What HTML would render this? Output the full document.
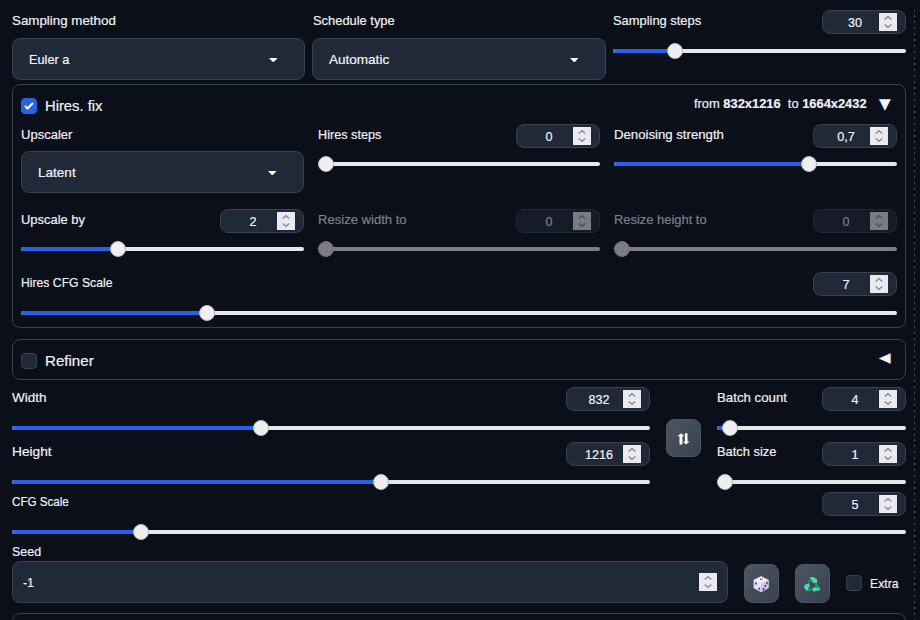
<!DOCTYPE html>
<html lang="en">
<head>
<meta charset="utf-8">
<title>txt2img settings</title>
<style>
html,body{margin:0;padding:0;background:#0b0f19;}
body{width:920px;height:620px;overflow:hidden;position:relative;
  font-family:"Liberation Sans",sans-serif;color:#f3f4f6;font-size:13px;}
#app{position:absolute;left:0;top:0;width:920px;height:620px;overflow:hidden;background:#0b0f19;}
#app *{box-sizing:border-box;}
.lbl{position:absolute;margin-top:1px;margin-left:0.3px;-webkit-text-stroke:0.2px currentColor;white-space:nowrap;font-size:13.5px;line-height:20px;color:#f0f1f4;transform-origin:0 50%;}
.lbl.dis{color:#7c8089;}
.big{position:absolute;margin-top:0.5px;margin-left:-0.5px;white-space:nowrap;font-size:15.5px;line-height:20px;color:#f3f4f6;-webkit-text-stroke:0.2px #f3f4f6;transform-origin:0 50%;}
.panel{position:absolute;border:1px solid #374151;border-radius:8px;background:#0b0f19;}
.dd{position:absolute;height:42px;border:1px solid #374151;border-radius:8px;background:#1f2937;}
.dd span{-webkit-text-stroke:0.2px currentColor;position:absolute;left:15.5px;top:11px;line-height:20px;font-size:13.5px;white-space:nowrap;transform-origin:0 50%;}
.dd svg{position:absolute;right:26px;top:18.8px;width:8.6px;height:4.5px;}
.num{position:absolute;width:84px;height:24px;border:1px solid #374151;border-radius:8px;background:#1f2937;}
.num span{-webkit-text-stroke:0.2px currentColor;position:absolute;left:8px;width:48px;top:2px;transform:scaleX(0.93);text-align:center;line-height:20px;font-size:13.5px;color:#f3f4f6;}
.num i{position:absolute;right:8px;top:2px;width:18px;height:18px;background:#ebe9f0;}
.num i svg{position:absolute;left:0;top:0;width:18px;height:18px;}
.num.dis{background:#151b28;border-color:#212836;}
.num.dis span{color:#7c8089;}
.num.dis i{background:#7b7c83;}
.sl{position:absolute;height:4px;background:#e5e7eb;border-radius:2px;}
.sl b{position:absolute;left:0;top:0;height:4px;background:#2563eb;border-radius:2px 0 0 2px;}
.sl u{position:absolute;top:-6px;width:16px;height:16px;border-radius:50%;background:#efefef;border:1px solid #bdb9b1;}
.sl.dis{background:#7c7e84;}
.sl.dis u{background:#7c7e84;border-color:#6f7076;}
.cb{position:absolute;width:16px;height:16px;border:1px solid #374151;border-radius:4px;background:#1f2937;}
.cb.on{background:#2563eb;border-color:#2563eb;}
.cb svg{position:absolute;left:-1px;top:-1px;width:16px;height:16px;}
.btn{position:absolute;border:1px solid #4b5563;border-radius:8px;background:linear-gradient(to bottom right,#4b5563,#374151);}
.btn svg{position:absolute;}
.tri{position:absolute;font-family:"DejaVu Sans",sans-serif;font-size:15px;line-height:20px;color:#f3f4f6;white-space:nowrap;}
#handle{position:absolute;left:914px;top:10px;width:1px;height:610px;background:repeating-linear-gradient(to bottom,#444b5d 0,#444b5d 1px,transparent 1px,transparent 4.98px,#444b5d 4.98px,#444b5d 5.979px);}
</style>
</head>
<body>
<div id="app">

<!-- row 1 -->
<div class="lbl" style="transform:scaleX(0.988);left:12px;top:10px">Sampling method</div>
<div class="dd" style="left:12px;top:38px;width:293px"><span style="transform:scaleX(0.945)">Euler a</span><svg viewBox="0 0 9 4.6"><path d="M0 0h9L4.5 4.6z" fill="#fff"/></svg></div>
<div class="lbl" style="transform:scaleX(0.955);left:313px;top:10px">Schedule type</div>
<div class="dd" style="left:312px;top:38px;width:294px"><span style="transform:scaleX(1.002)">Automatic</span><svg viewBox="0 0 9 4.6"><path d="M0 0h9L4.5 4.6z" fill="#fff"/></svg></div>
<div class="lbl" style="transform:scaleX(0.955);left:613px;top:10px">Sampling steps</div>
<div class="num" style="left:822px;top:10px"><span>30</span><i><svg viewBox="0 0 18 18"><path d="M5.7 6.4L9 3.7l3.3 2.7M5.7 11.6L9 14.3l3.3-2.7" fill="none" stroke="#8a8892" stroke-width="1.3"/></svg></i></div>
<div class="sl" style="left:613px;top:49px;width:293px"><b style="width:62px"></b><u style="left:54px"></u></div>

<!-- hires fix panel -->
<div class="panel" style="left:12px;top:84px;width:894px;height:244px"></div>
<div class="cb on" style="left:21px;top:98px"><svg viewBox="0 0 16 16"><path d="M12.207 4.793a1 1 0 010 1.414l-5 5a1 1 0 01-1.414 0l-2-2a1 1 0 011.414-1.414L6.5 9.086l4.293-4.293a1 1 0 011.414 0z" fill="#fff"/></svg></div>
<div class="big" style="transform:scaleX(0.953);left:45px;top:95px">Hires. fix</div>
<div class="lbl" id="fromto" style="transform:scaleX(0.954);font-size:13.5px;left:694px;top:93px">from <strong>832x1216</strong> &nbsp;to <strong>1664x2432</strong></div>
<div class="tri" style="left:879px;top:94px;transform:scaleX(1.02);transform-origin:0 50%">▼</div>

<div class="lbl" style="transform:scaleX(0.964);left:21px;top:124px">Upscaler</div>
<div class="dd" style="left:21px;top:151px;width:283px"><span style="transform:scaleX(1.003)">Latent</span><svg viewBox="0 0 9 4.6"><path d="M0 0h9L4.5 4.6z" fill="#fff"/></svg></div>
<div class="lbl" style="transform:scaleX(0.938);left:318px;top:124px">Hires steps</div>
<div class="num" style="left:516px;top:124px"><span>0</span><i><svg viewBox="0 0 18 18"><path d="M5.7 6.4L9 3.7l3.3 2.7M5.7 11.6L9 14.3l3.3-2.7" fill="none" stroke="#8a8892" stroke-width="1.3"/></svg></i></div>
<div class="sl" style="left:318px;top:162px;width:282px"><u style="left:0px"></u></div>
<div class="lbl" style="transform:scaleX(0.976);left:614px;top:124px">Denoising strength</div>
<div class="num" style="left:813px;top:124px"><span>0,7</span><i><svg viewBox="0 0 18 18"><path d="M5.7 6.4L9 3.7l3.3 2.7M5.7 11.6L9 14.3l3.3-2.7" fill="none" stroke="#8a8892" stroke-width="1.3"/></svg></i></div>
<div class="sl" style="left:614px;top:162px;width:283px"><b style="width:195px"></b><u style="left:187px"></u></div>

<div class="lbl" style="transform:scaleX(0.958);left:21px;top:209px">Upscale by</div>
<div class="num" style="left:220px;top:209px"><span>2</span><i><svg viewBox="0 0 18 18"><path d="M5.7 6.4L9 3.7l3.3 2.7M5.7 11.6L9 14.3l3.3-2.7" fill="none" stroke="#8a8892" stroke-width="1.3"/></svg></i></div>
<div class="sl" style="left:21px;top:247px;width:283px"><b style="width:97px"></b><u style="left:89px"></u></div>
<div class="lbl dis" style="transform:scaleX(0.968);left:318px;top:209px">Resize width to</div>
<div class="num dis" style="left:516px;top:209px"><span>0</span><i><svg viewBox="0 0 18 18"><path d="M5.7 6.4L9 3.7l3.3 2.7M5.7 11.6L9 14.3l3.3-2.7" fill="none" stroke="#4d4e55" stroke-width="1.3"/></svg></i></div>
<div class="sl dis" style="left:318px;top:247px;width:282px"><u style="left:0px"></u></div>
<div class="lbl dis" style="transform:scaleX(0.957);left:614px;top:209px">Resize height to</div>
<div class="num dis" style="left:813px;top:209px"><span>0</span><i><svg viewBox="0 0 18 18"><path d="M5.7 6.4L9 3.7l3.3 2.7M5.7 11.6L9 14.3l3.3-2.7" fill="none" stroke="#4d4e55" stroke-width="1.3"/></svg></i></div>
<div class="sl dis" style="left:614px;top:247px;width:283px"><u style="left:0px"></u></div>

<div class="lbl" style="transform:scaleX(0.903);left:21px;top:272px">Hires CFG Scale</div>
<div class="num" style="left:813px;top:272px"><span>7</span><i><svg viewBox="0 0 18 18"><path d="M5.7 6.4L9 3.7l3.3 2.7M5.7 11.6L9 14.3l3.3-2.7" fill="none" stroke="#8a8892" stroke-width="1.3"/></svg></i></div>
<div class="sl" style="left:21px;top:311px;width:876px"><b style="width:186px"></b><u style="left:178px"></u></div>

<!-- refiner panel -->
<div class="panel" style="left:12px;top:339px;width:894px;height:41px"></div>
<div class="cb" style="left:21px;top:353px"></div>
<div class="big" style="transform:scaleX(0.974);left:45px;top:350px">Refiner</div>
<div class="tri" style="left:878.8px;top:346.8px;transform:scale(1.03,0.9);transform-origin:6.5px 11px">◀</div>

<!-- width / height / batch -->
<div class="lbl" style="transform:scaleX(1.002);left:12px;top:387px">Width</div>
<div class="num" style="left:566px;top:387px"><span>832</span><i><svg viewBox="0 0 18 18"><path d="M5.7 6.4L9 3.7l3.3 2.7M5.7 11.6L9 14.3l3.3-2.7" fill="none" stroke="#8a8892" stroke-width="1.3"/></svg></i></div>
<div class="sl" style="left:12px;top:426px;width:638px"><b style="width:249px"></b><u style="left:241px"></u></div>
<div class="lbl" style="transform:scaleX(1.015);left:12px;top:441px">Height</div>
<div class="num" style="left:566px;top:442px"><span>1216</span><i><svg viewBox="0 0 18 18"><path d="M5.7 6.4L9 3.7l3.3 2.7M5.7 11.6L9 14.3l3.3-2.7" fill="none" stroke="#8a8892" stroke-width="1.3"/></svg></i></div>
<div class="sl" style="left:12px;top:480px;width:638px"><b style="width:369px"></b><u style="left:361px"></u></div>

<div class="btn" style="left:666px;top:419px;width:35px;height:38px"><svg style="left:10px;top:12.5px" width="13" height="12" viewBox="0 0 13 12"><path d="M4 0.3L7.5 3.2H5.4V11.4H2.5V3.2H0.4zM9.1 11.4L12.6 8.6H10.5V0.3H7.9V8.6H5.8z" fill="#fff"/></svg></div>

<div class="lbl" style="transform:scaleX(0.982);left:717px;top:387px">Batch count</div>
<div class="num" style="left:822px;top:387px"><span>4</span><i><svg viewBox="0 0 18 18"><path d="M5.7 6.4L9 3.7l3.3 2.7M5.7 11.6L9 14.3l3.3-2.7" fill="none" stroke="#8a8892" stroke-width="1.3"/></svg></i></div>
<div class="sl" style="left:717px;top:426px;width:189px"><b style="width:13px"></b><u style="left:5px"></u></div>
<div class="lbl" style="transform:scaleX(0.953);left:717px;top:441px">Batch size</div>
<div class="num" style="left:822px;top:442px"><span>1</span><i><svg viewBox="0 0 18 18"><path d="M5.7 6.4L9 3.7l3.3 2.7M5.7 11.6L9 14.3l3.3-2.7" fill="none" stroke="#8a8892" stroke-width="1.3"/></svg></i></div>
<div class="sl" style="left:717px;top:480px;width:189px"><u style="left:0px"></u></div>

<!-- cfg -->
<div class="lbl" style="transform:scaleX(0.86);left:12px;top:491px">CFG Scale</div>
<div class="num" style="left:822px;top:492px"><span>5</span><i><svg viewBox="0 0 18 18"><path d="M5.7 6.4L9 3.7l3.3 2.7M5.7 11.6L9 14.3l3.3-2.7" fill="none" stroke="#8a8892" stroke-width="1.3"/></svg></i></div>
<div class="sl" style="left:12px;top:530px;width:894px"><b style="width:129px"></b><u style="left:121px"></u></div>

<!-- seed -->
<div class="lbl" style="transform:scaleX(0.923);left:12px;top:541px">Seed</div>
<div class="dd" id="seed" style="left:12px;top:561px;width:716px"><span style="transform:scaleX(0.917);left:10px">-1</span></div>
<div class="num" style="left:690px;top:570px;border:0;background:none;width:36px"><i style="right:9px;top:3px"><svg viewBox="0 0 18 18"><path d="M5.7 6.4L9 3.7l3.3 2.7M5.7 11.6L9 14.3l3.3-2.7" fill="none" stroke="#8a8892" stroke-width="1.3"/></svg></i></div>
<div class="btn" style="left:744px;top:564px;width:35px;height:39px"><svg style="left:7.7px;top:10.9px" width="16.4" height="16.4" viewBox="0 0 16 16"><g stroke-linejoin="round" stroke-width="1.2"><path d="M8 0.9L14.8 4.2 8 7.8 1.2 4.2z" fill="#f6f3fb" stroke="#f6f3fb"/><path d="M1.2 4.2L8 7.8v7.3L1.2 11.5z" fill="#e6e1f0" stroke="#e6e1f0"/><path d="M14.8 4.2L8 7.8v7.3l6.800-3.600z" fill="#cfc8de" stroke="#cfc8de"/></g><ellipse cx="8.1" cy="3.2" rx="1.5" ry="1" fill="#f0557a"/><g fill="#45349c"><ellipse cx="2.9" cy="7.3" rx=".85" ry="1.25"/><ellipse cx="6.100" cy="12.500" rx=".85" ry="1.25"/><ellipse cx="13.7" cy="6.9" rx=".8" ry="1.25" transform="rotate(25 13.7 6.9)"/><ellipse cx="12" cy="9.7" rx=".8" ry="1.25" transform="rotate(25 12 9.7)"/><ellipse cx="10.3" cy="12.8" rx=".8" ry="1.25" transform="rotate(25 10.3 12.8)"/></g></svg></div>
<div class="btn" style="left:795px;top:564px;width:35px;height:39px"><svg style="left:7.9px;top:11.8px" width="16.3" height="15.3" viewBox="0 0 16.3 15.3"><path d="M6.2 0.8L7.9 4.8 6.2 5.8 3.5 4.6z" fill="#1e856d"/><path d="M5.6 0.4C6 0 9.4 0 9.9 0.3L13.3 2.8 12.8 6.6 8.8 5.7 7.6 3z" fill="#45e0a0"/><path d="M12.8 6.4L15.6 10.3 11.6 10 11 7.4z" fill="#239672"/><path d="M16.2 10.6C16.4 11.4 15.6 13.4 15 13.7H11.6L10.5 15.2 7.8 12.6 10.6 9.8 11.6 10.6z" fill="#45e0a0"/><path d="M3.4 11.3H7.4V14.1H3.6C3.2 14.1 2.8 13.8 2.6 13.4z" fill="#239672"/><path d="M0.7 8L5 6.1 5.9 9.9 4.3 10.6 3.6 13.8C2.6 13.6 0 11.6 0 10.8z" fill="#45e0a0"/></svg></div>
<div class="cb" style="left:846px;top:575px"></div>
<div class="lbl" style="transform:scaleX(0.908);left:870px;top:573px">Extra</div>

<!-- next panel -->
<div class="panel" style="left:12px;top:613px;width:894px;height:40px"></div>

<div id="handle"></div>
</div>
</body>
</html>
